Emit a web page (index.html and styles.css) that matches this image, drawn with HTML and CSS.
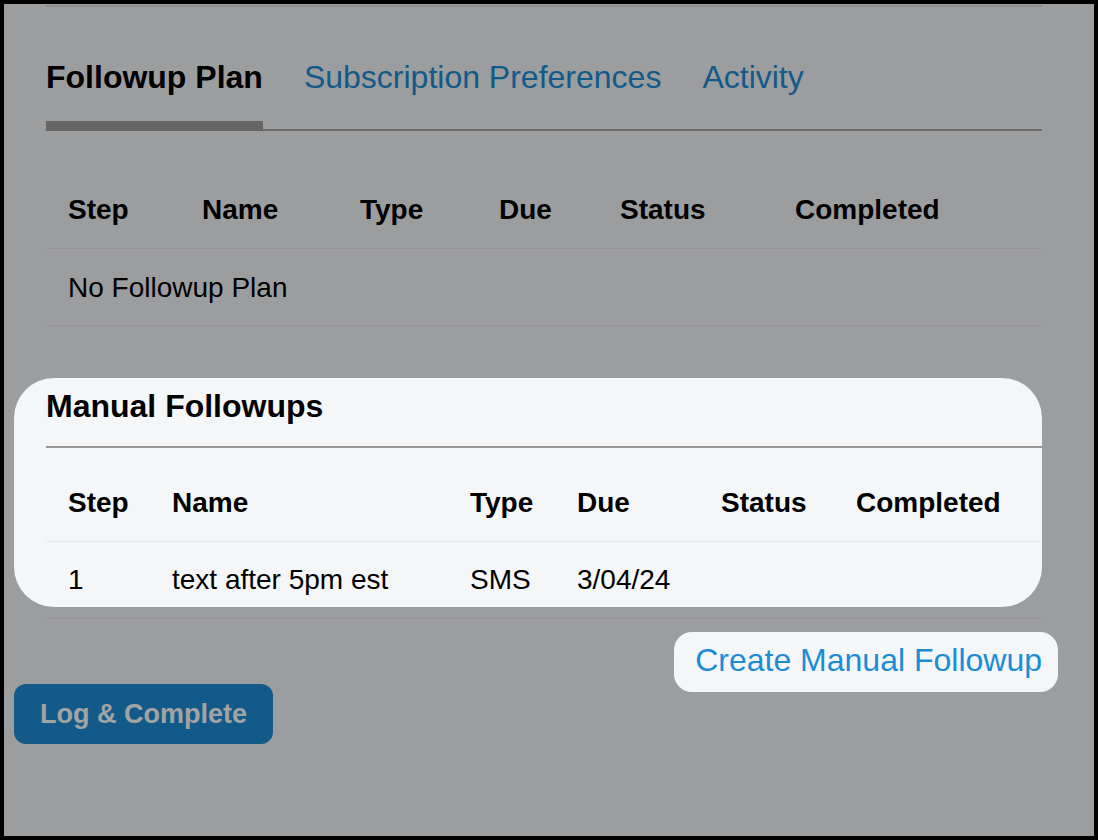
FILE: index.html
```html
<!DOCTYPE html>
<html lang="en">
<head>
  <meta charset="UTF-8" />
  <meta name="viewport" content="width=device-width, initial-scale=1.0"/>
  <title>Followups</title>
  <link rel="stylesheet" href="styles.css">
</head>
<body>

  <div class="frame">
    <div class="modal">
      <div class="panel">
        <div class="topline"></div>

        <div class="tabs">
          <a class="tab active">Followup Plan</a>
          <a class="tab">Subscription Preferences</a>
          <a class="tab">Activity</a>
        </div>

        <table class="grid plan">
          <colgroup>
            <col class="p1"><col class="p2"><col class="p3"><col class="p4"><col class="p5"><col class="p6">
          </colgroup>
          <tr>
            <th>Step</th><th>Name</th><th>Type</th><th>Due</th><th>Status</th><th>Completed</th>
          </tr>
          <tr>
            <td class="empty" colspan="6">No Followup Plan</td>
          </tr>
        </table>

        <h3 class="section-title">Manual Followups</h3>

        <table class="grid manual">
          <colgroup>
            <col class="m1"><col class="m2"><col class="m3"><col class="m4"><col class="m5"><col class="m6">
          </colgroup>
          <tr>
            <th>Step</th><th>Name</th><th>Type</th><th>Due</th><th>Status</th><th>Completed</th>
          </tr>
          <tr>
            <td>1</td><td>text after 5pm est</td><td>SMS</td><td>3/04/24</td><td></td><td></td>
          </tr>
        </table>

        <div class="actions">
          <a class="create-link">Create Manual Followup</a>
        </div>
      </div>

      <button class="log-btn">Log &amp; Complete</button>
    </div>
  </div>

  <!-- tour overlay with two spotlight holes -->
  <svg class="tour-overlay" width="1098" height="840" viewBox="0 0 1098 840">
    <path fill-rule="evenodd" d="M0 0 H1098 V840 H0 Z
      M54 378 H1002 A40 40 0 0 1 1042 418 V567 A40 40 0 0 1 1002 607 H54 A40 40 0 0 1 14 567 V418 A40 40 0 0 1 54 378 Z
      M692 632 H1040 A18 18 0 0 1 1058 650 V674 A18 18 0 0 1 1040 692 H692 A18 18 0 0 1 674 674 V650 A18 18 0 0 1 692 632 Z"/>
  </svg>

</body>
</html>
```

FILE: styles.css
```css
body {
  font-family: "Liberation Sans", Arial, sans-serif;
  margin: 0;
  padding: 0;
  position: relative;
  color: #000;
}

.frame {
  width: 1098px;
  height: 840px;
  box-sizing: border-box;
  border: 4px solid #000;
  background: #f5f6f7;
  overflow: hidden;
}

.modal {
  padding: 0 52px 0 10px;
}

.panel {
  margin-left: 32px;
}

.topline {
  height: 1px;
  border-bottom: 2px solid #dedede;
}

.tabs {
  display: flex;
  margin-top: 52px;
  border-bottom: 2px solid #aaaaaa;
}

.tab {
  font-size: 32px;
  line-height: 36px;
  color: #1b8dd7;
  margin-right: 41px;
  padding-bottom: 26px;
  border-bottom: 10px solid transparent;
  margin-bottom: -2px;
  cursor: pointer;
}

.tab.active {
  color: #000;
  font-weight: bold;
  border-bottom-color: #9e9e9e;
}

.grid {
  width: 100%;
  table-layout: fixed;
  border-collapse: separate;
  border-spacing: 0;
  font-size: 28px;
  line-height: 32px;
}

.grid th,
.grid td {
  text-align: left;
  padding: 22px 0 22px 22px;
  border-bottom: 1px solid #e6e7e9;
  white-space: nowrap;
}

.grid th {
  font-weight: bold;
}

.grid td.empty {
  padding: 23px 0 21px 22px;
}

.plan {
  margin-top: 41px;
}

.p1 { width: 134px; }
.p2 { width: 158px; }
.p3 { width: 139px; }
.p4 { width: 121px; }
.p5 { width: 175px; }
.p6 { width: 269px; }

.m1 { width: 104px; }
.m2 { width: 298px; }
.m3 { width: 107px; }
.m4 { width: 144px; }
.m5 { width: 135px; }
.m6 { width: 208px; }

.section-title {
  font-size: 32px;
  line-height: 36px;
  font-weight: bold;
  margin: 62px 0 0;
  padding-bottom: 22px;
  border-bottom: 2px solid #999;
}

.manual {
  margin-top: 17px;
}

.actions {
  display: flex;
  justify-content: flex-end;
  margin-top: 23px;
}

.create-link {
  font-size: 32px;
  line-height: 36px;
  color: #1b8dd7;
  cursor: pointer;
}

.log-btn {
  display: block;
  margin-top: 6px;
  height: 60px;
  padding: 0 26px;
  border: none;
  border-radius: 12px;
  background: #1b8dd7;
  color: #fff;
  font-family: inherit;
  font-size: 27px;
  font-weight: bold;
  line-height: 60px;
  cursor: pointer;
}

.tour-overlay {
  position: absolute;
  top: 0;
  left: 0;
  pointer-events: none;
}

.tour-overlay path {
  fill: rgba(0, 0, 0, 0.36);
}
```
